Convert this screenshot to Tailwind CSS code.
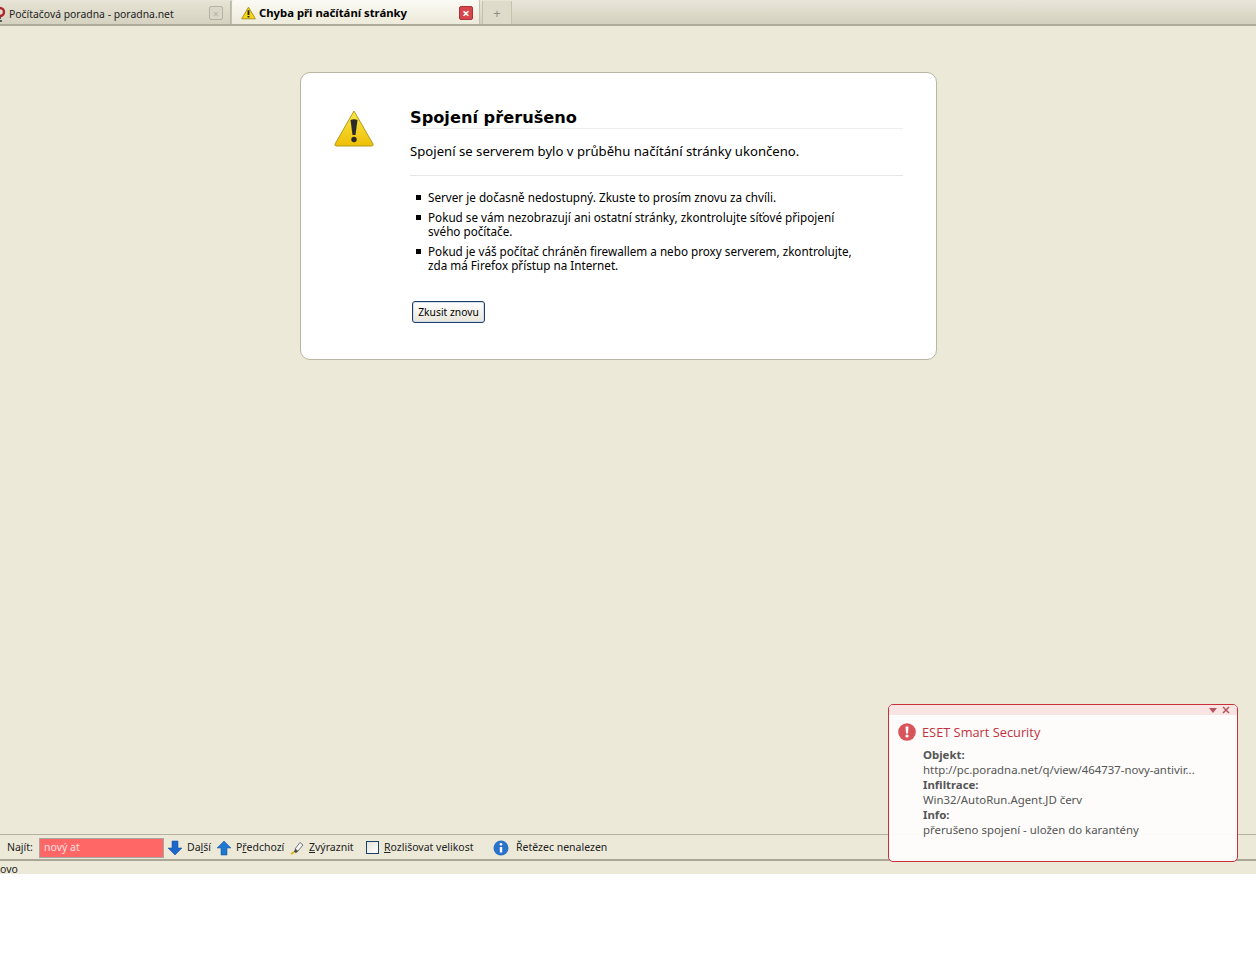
<!DOCTYPE html>
<html lang="cs">
<head>
  <meta charset="UTF-8" />
  <title>Chyba při načítání stránky</title>
  <script src="https://cdn.jsdelivr.net/npm/@tailwindcss/browser@4"></script>
</head>
<body class="bg-white w-[1256px] h-[972px] overflow-hidden relative font-['Noto_Sans',sans-serif] text-[11.7px] text-black">

  <!-- Tabs -->
  <div class="h-[26px] flex items-end bg-gradient-to-b from-[#e9e6d9] to-[#d3d0be] border-b-2 border-b-[#aeab9b] overflow-hidden">
    <div class="w-[231px] h-[23px] shrink-0 flex items-center pt-[3px] bg-gradient-to-b from-[#e6e3d4] to-[#d5d2c1] border-r border-[#b9b6a6]">
      <svg class="w-[6px] h-[16px] shrink-0" viewBox="10 0 6 16"><circle cx="10" cy="6" r="4" fill="none" stroke="#b0252a" stroke-width="2.4"/><path d="M10 11v2M7 15h5" stroke="#333" stroke-width="1.5"/></svg>
      <span class="ml-[3px] text-[10.4px] text-[#222] leading-none">Počítačová poradna - poradna.net</span>
      <span class="ml-auto mr-[7px] mb-[2px] w-[14px] h-[14px] rounded-[2px] border border-[#b5b2a4] bg-[#dad7c8] text-[#b5b2a4] text-[11px] flex items-center justify-center leading-none">×</span>
    </div>
    <div class="w-[249px] h-[27px] mb-[-2px] pt-[1px] shrink-0 flex items-center bg-gradient-to-b from-[#fbfaf5] to-[#ece9d8] rounded-t-[3px] border-x border-[#c4c1b1]">
      <svg class="w-[15px] h-[14px] ml-[9px] shrink-0" viewBox="0 0 16 14"><path d="M8 .8 15.3 13.2H.7Z" fill="#f6d516" stroke="#a98f12" stroke-linejoin="round"/><path d="M8 4v5M8 10.2v1.600" stroke="#222" stroke-width="2"/></svg>
      <span class="ml-[3px] font-bold text-[11.3px] leading-none text-black">Chyba při načítání stránky</span>
      <span class="ml-auto mr-[6px] w-[14px] h-[14px] rounded-[2px] bg-[#d8454b] border border-[#a83338] text-white text-[13px] font-bold flex items-center justify-center leading-none">×</span>
    </div>
    <div class="ml-[2px] w-[30px] h-[23px] pt-[2px] shrink-0 flex items-center justify-center bg-[#dedbca] border-x border-[#c4c1b1] text-[#908d80] text-[13px] leading-none">+</div>
  </div>

  <!-- Content -->
  <main class="h-[808px] bg-[#ece9d8] pt-[46px]">
    <section class="ml-[300px] w-[637px] h-[288px] bg-white border border-[#b9b6a3] rounded-[10px] pl-[109px] pr-[33px] pt-[34px] relative">
      <svg class="absolute left-[32px] top-[36px] w-[42px] h-[40px]" viewBox="0 0 42 40">
        <defs><linearGradient id="w" x1="0" y1="0" x2="0" y2="1"><stop offset="0" stop-color="#fbe94a"/><stop offset="1" stop-color="#eebe06"/></linearGradient></defs>
        <path d="M21 2 40 35a1.500 1.500 0 0 1-1.300 2H3.300a1.500 1.500 0 0 1-1.300-2Z" fill="url(#w)" stroke="#b59a18" stroke-linejoin="round"/>
        <path d="M17.500 11q3.500-1.500 7 0L22.500 26h-3Z" fill="#2b2b2b"/><circle cx="21" cy="30.500" r="2.700" fill="#2b2b2b"/>
      </svg>
      <h1 class="font-['DejaVu_Sans',sans-serif] font-bold text-[16.2px] leading-[22px] h-[22px] border-b border-[#eeeeee]">Spojení přerušeno</h1>
      <p class="mt-[12px] h-[35px] text-[13.15px] leading-[20px] border-b border-[#e6e6e6]">Spojení se serverem bylo v průběhu načítání stránky ukončeno.</p>
      <ul class="mt-[14px] w-[450px] list-none leading-[14px] flex flex-col gap-[6px]">
        <li class="pl-[18px] relative"><span class="absolute left-[6px] top-[5px] w-[5px] h-[5px] bg-black"></span>Server je dočasně nedostupný. Zkuste to prosím znovu za chvíli.</li>
        <li class="pl-[18px] relative"><span class="absolute left-[6px] top-[5px] w-[5px] h-[5px] bg-black"></span>Pokud se vám nezobrazují ani ostatní stránky, zkontrolujte síťové připojení svého počítače.</li>
        <li class="pl-[18px] relative"><span class="absolute left-[6px] top-[5px] w-[5px] h-[5px] bg-black"></span>Pokud je váš počítač chráněn firewallem a nebo proxy serverem, zkontrolujte, zda má Firefox přístup na Internet.</li>
      </ul>
      <button class="mt-[29px] ml-[2px] w-[73px] h-[22px] rounded-[3px] border border-[#1f3f68] bg-gradient-to-b from-white to-[#e9e6da] text-[10.3px] leading-none shadow-[inset_0_0_0_1px_#d0dcec]">Zkusit znovu</button>
    </section>
  </main>

  <!-- Find bar -->
  <div class="h-[27px] pt-[1px] bg-[#ece9d8] border-t border-[#b4b1a1] border-b-2 border-b-[#a9a696] flex items-center whitespace-nowrap text-[10.5px] text-[#222] leading-none">
    <span class="ml-[7px] w-[26px]">Najít:</span>
    <span class="ml-[6px] w-[125px] h-[20px] bg-[#ff6666] border border-[#a9a6a0] pl-[4px] flex items-center text-[#ffe0e0]">nový at</span>
    <svg class="ml-[4px] w-[14px] h-[16px]" viewBox="0 0 14 16"><path d="M4 1h6v7h4L7 15 0 8h4Z" fill="#1e66c9" stroke="#124a9c" stroke-width=".5"/></svg>
    <span class="ml-[5px] w-[22px]">Da<span class="underline">l</span>ší</span>
    <svg class="ml-[8px] w-[14px] h-[16px]" viewBox="0 0 14 16"><path d="M4 15h6V8h4L7 1 0 8h4Z" fill="#1e7ad0" stroke="#124a9c" stroke-width=".5"/></svg>
    <span class="ml-[5px] w-[47px]">P<span class="underline">ř</span>edchozí</span>
    <svg class="ml-[7px] w-[14px] h-[14px]" viewBox="0 0 14 14"><path d="m5 8 5-6.500 3 2.500-5 6Z" fill="#f5f5f5" stroke="#777"/><path d="m5 8 3 2.500-2 1.500-2-1Z" fill="#444"/><path d="m1 13 3-2" stroke="#d9b700" stroke-width="2"/></svg>
    <span class="ml-[5px] w-[45px]"><span class="underline">Z</span>výraznit</span>
    <span class="ml-[12px] w-[13px] h-[13px] border border-[#1c3f66] bg-gradient-to-br from-[#e5e3da] to-white"></span>
    <span class="ml-[5px] w-[88px]"><span class="underline">R</span>ozlišovat velikost</span>
    <svg class="ml-[21px] w-[16px] h-[16px]" viewBox="0 0 16 16"><circle cx="8" cy="8" r="7.500" fill="#2a73c9"/><circle cx="8" cy="4.300" r="1.300" fill="#fff"/><path d="M6.800 7h2.400v5.500H6.800Z" fill="#fff"/></svg>
    <span class="ml-[7px]">Řetězec nenalezen</span>
  </div>

  <!-- Status bar -->
  <div class="h-[13px] bg-[#ece9d8] overflow-hidden text-[10.5px] leading-[17px] text-[#222]">ovo</div>

  <!-- ESET popup -->
  <aside class="absolute left-[888px] top-[704px] w-[350px] h-[158px] rounded-[5px] border border-[#c8303c] bg-[#fefdfc]/95 text-[#555]">
    <div class="h-[10px] bg-[#f8e4e2] rounded-t-[4px] flex items-center justify-end gap-[5px] pr-[7px]">
      <svg class="w-[8px] h-[5px]" viewBox="0 0 8 5"><path d="M0 0h8L4 5Z" fill="#b5545c"/></svg>
      <svg class="w-[8px] h-[8px]" viewBox="0 0 8 8"><path d="m1 1 6 6M7 1 1 7" stroke="#b5545c" stroke-width="1.500"/></svg>
    </div>
    <div class="flex items-center mt-[7px] pl-[9px] h-[20px]">
      <svg class="w-[18px] h-[18px]" viewBox="0 0 18 18"><circle cx="9" cy="9" r="8.800" fill="#d9535a"/><path d="M7.500 3.500h3L10 10.500H8Z" fill="#fff"/><circle cx="9" cy="13" r="1.600" fill="#fff"/></svg>
      <span class="ml-[6px] text-[12.8px] leading-none text-[#c0323f] font-['Open_Sans',sans-serif]">ESET Smart Security</span>
    </div>
    <div class="mt-[5px] ml-[34px] text-[11.4px] leading-[15px]">
      <div class="font-bold">Objekt:</div>
      <div>http://pc.poradna.net/q/view/464737-novy-antivir...</div>
      <div class="font-bold">Infiltrace:</div>
      <div>Win32/AutoRun.Agent.JD červ</div>
      <div class="font-bold">Info:</div>
      <div>přerušeno spojení - uložen do karantény</div>
    </div>
  </aside>

</body>
</html>
